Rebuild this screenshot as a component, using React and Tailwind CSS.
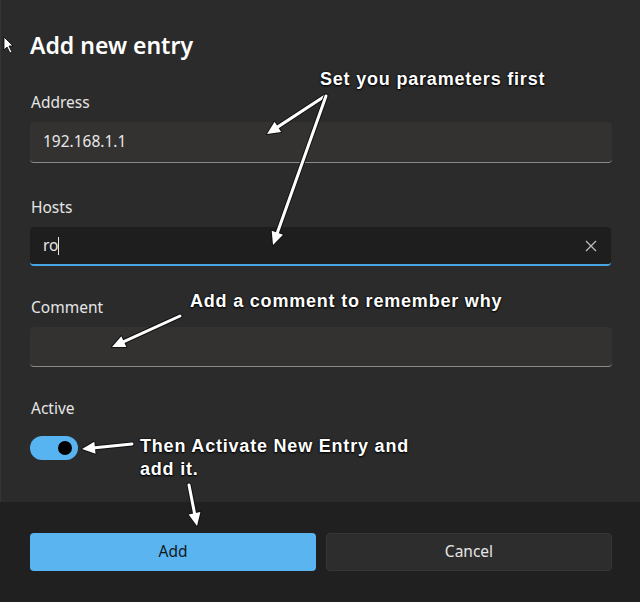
import React from 'react';

function Field({ label, className = '', children }) {
  return (
    <div className={`flex flex-col ${className}`}>
      <label className="h-5 text-[15.5px] leading-5 text-[#e6e6e6]">{label}</label>
      <div className="mt-[10px]">{children}</div>
    </div>
  );
}

function Arrow({ x1, y1, x2, y2 }) {
  // arrowhead at x2,y2
  const dx = x2 - x1;
  const dy = y2 - y1;
  const len = Math.hypot(dx, dy);
  const ux = dx / len;
  const uy = dy / len;
  const hl = 13;
  const hw = 6;
  const bx = x2 - ux * hl;
  const by = y2 - uy * hl;
  const p1 = `${bx - uy * hw},${by + ux * hw}`;
  const p2 = `${bx + uy * hw},${by - ux * hw}`;
  return (
    <g>
      <line x1={x1} y1={y1} x2={bx} y2={by} stroke="#111" strokeWidth="5" strokeLinecap="round" />
      <polygon points={`${x2},${y2} ${p1} ${p2}`} fill="#111" stroke="#111" strokeWidth="2" strokeLinejoin="round" />
      <line x1={x1} y1={y1} x2={bx} y2={by} stroke="#fff" strokeWidth="3" strokeLinecap="round" />
      <polygon points={`${x2},${y2} ${p1} ${p2}`} fill="#fff" />
    </g>
  );
}

export default function App() {
  const note = "absolute font-['Liberation_Sans',Arial,sans-serif] font-bold text-[18px] tracking-[0.8px] leading-[23px] text-white [text-shadow:0_0_2px_#000,0_1px_2px_#000]";

  return (
    <div className="relative w-[640px] h-[602px] overflow-hidden bg-[#2b2b2b] font-['Segoe_UI','Noto_Sans',sans-serif] text-white">
      <div className="px-[30px] pt-[30px] h-[502px] border-l border-[#353535]">
        <h1 className="-ml-px text-[23px] leading-[30px] font-semibold text-white">Add new entry</h1>

        <div className="mt-[32px] flex flex-col">
          <Field label="Address">
            <div className="-ml-px h-[41px] w-[582px] rounded-[4px] bg-[#333231] border-b border-[#8a8a8a] flex items-center px-[13px] text-[15.5px] text-[#e8e8e8]">
              192.168.1.1
            </div>
          </Field>

          <Field label="Hosts" className="mt-[34px]">
            <div className="-ml-px h-[39px] w-[581px] rounded-[4px] bg-[#1e1e1e] border-b-2 border-[#4aa6e2] flex items-center px-[13px] text-[15.5px] text-[#e8e8e8]">
              <span>ro</span>
              <span className="w-px h-[18px] bg-[#e8e8e8]"></span>
              <span className="ml-auto mr-[1px] text-[#bdbdbd]">
                <svg width="12" height="12" viewBox="0 0 12 12" fill="none" stroke="currentColor" strokeWidth="1.3">
                  <path d="M1 1L11 11M11 1L1 11" />
                </svg>
              </span>
            </div>
          </Field>

          <Field label="Comment" className="mt-[31px]">
            <div className="-ml-px h-10 w-[582px] rounded-[4px] bg-[#333231] border-b border-[#8a8a8a]"></div>
          </Field>

          <Field label="Active" className="mt-[31px]">
            <div className="-ml-px mt-[8px] w-12 h-6 rounded-full bg-[#58b4f0] flex items-center justify-end pr-[6px]">
              <span className="w-[14px] h-[14px] rounded-full bg-black"></span>
            </div>
          </Field>
        </div>
      </div>

      <div className="h-[100px] bg-[#202020] pl-[30px] pr-[28px] pt-[31px] flex gap-[10px]">
        <button className="shrink-0 w-[286px] h-[38px] rounded-[4px] bg-[#5ab4f0] text-[#101820] text-[15.5px]">Add</button>
        <button className="shrink-0 w-[286px] h-[38px] rounded-[4px] bg-[#2d2d2d] border border-[#353535] text-[#e6e6e6] text-[15.5px]">Cancel</button>
      </div>

      {/* annotations */}
      <svg className="absolute left-0 top-0 pointer-events-none" width="640" height="602">
        <Arrow x1={325} y1={96} x2={267} y2={134} />
        <Arrow x1={326} y1={96} x2={273} y2={245} />
        <Arrow x1={180} y1={316} x2={112} y2={347} />
        <Arrow x1={132} y1={444} x2={82} y2={449} />
        <Arrow x1={189} y1={485} x2={197} y2={526} />
        <polygon points="4,37 4,50 7,47 10,53 12,52 9,46 13,46" fill="#fff" stroke="#000" strokeWidth="0.8" />
      </svg>

      <div className={`${note} left-[320px] top-[68px]`}>Set you parameters first</div>
      <div className={`${note} left-[190px] top-[290px]`}>Add a comment to remember why</div>
      <div className={`${note} left-[140px] top-[435px]`}>
        Then Activate New Entry and
        <br />
        add it.
      </div>
    </div>
  );
}
